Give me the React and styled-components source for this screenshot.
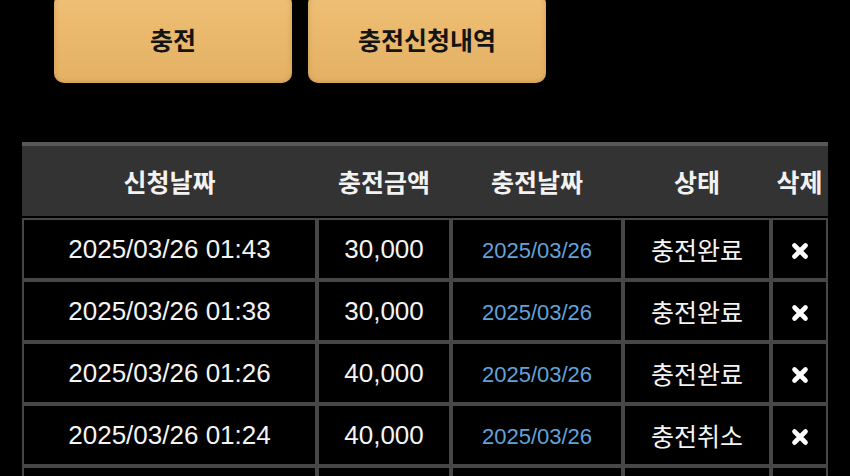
import React from 'react';
import styled, { createGlobalStyle } from 'styled-components';

const GlobalStyle = createGlobalStyle`
    html, body {
        margin: 0;
        padding: 0;
        background: #000;
        overflow: hidden;
    }
    body {
        font-family: "Noto Sans CJK KR", "Liberation Sans", sans-serif;
        color: #fff;
    }
`;

const Page = styled.div`
    padding: 0 22px;
`;

const ButtonRow = styled.div`
    display: flex;
    gap: 16px;
    padding-left: 32px;
    margin-top: -6px;
`;

const TabButton = styled.button`
    width: 238px;
    height: 89px;
    padding: 0;
    border: none;
    border-radius: 10px;
    background: linear-gradient(180deg, #eebf75 0%, #e9b86c 50%, #e4b164 100%);
    box-shadow: inset 0 0 5px rgba(150, 90, 20, 0.35), inset 0 2px 2px rgba(255, 235, 190, 0.3), 0 2px 3px rgba(0, 0, 0, 0.6);
    font-family: "Noto Sans CJK KR", sans-serif;
    font-size: 25px;
    font-weight: 700;
    color: #141414;
    cursor: pointer;
`;

const Table = styled.table`
    margin-top: 59px;
    width: 806px;
    table-layout: fixed;
    border-collapse: separate;
    border-spacing: 0;
`;

const HeadCell = styled.th`
    height: 70px;
    padding: 0;
    background: #333;
    border-top: 4px solid #585858;
    border-bottom: 2px solid #000;
    font-family: "Noto Sans CJK KR", sans-serif;
    font-size: 25px;
    font-weight: 700;
    color: #f2f2f2;
    text-align: center;
    vertical-align: middle;
`;

const Cell = styled.td`
    height: 58px;
    padding: 0;
    border: 2px solid #474747;
    background: #000;
    text-align: center;
    vertical-align: middle;
    color: #f4f4f4;
    font-family: ${({ $kr }) => ($kr ? '"Noto Sans CJK KR", sans-serif' : '"Liberation Sans", Arial, sans-serif')};
    font-size: ${({ $kr }) => ($kr ? 25 : 26)}px;
`;

const DateLink = styled.span`
    font-family: "Liberation Sans", Arial, sans-serif;
    font-size: 22px;
    color: #63a2d8;
`;

const DeleteIcon = () => (
    <svg width="18" height="18" viewBox="0 0 18 18" style={{ display: 'block', margin: '3px auto 0' }}>
        <path d="M3.5 3.5 L14.5 14.5 M14.5 3.5 L3.5 14.5" stroke="#fff" strokeWidth="4.6" strokeLinecap="round" />
    </svg>
);

const rows = [
    { requested: '2025/03/26 01:43', amount: '30,000', charged: '2025/03/26', status: '충전완료' },
    { requested: '2025/03/26 01:38', amount: '30,000', charged: '2025/03/26', status: '충전완료' },
    { requested: '2025/03/26 01:26', amount: '40,000', charged: '2025/03/26', status: '충전완료' },
    { requested: '2025/03/26 01:24', amount: '40,000', charged: '2025/03/26', status: '충전취소' },
    { requested: '2025/03/25 23:10', amount: '50,000', charged: '2025/03/25', status: '충전완료' },
];

export default function App() {
    return (
        <Page>
            <GlobalStyle />
            <ButtonRow>
                <TabButton>충전</TabButton>
                <TabButton>충전신청내역</TabButton>
            </ButtonRow>
            <Table>
                <colgroup>
                    <col style={{ width: 295 }} />
                    <col style={{ width: 134 }} />
                    <col style={{ width: 172 }} />
                    <col style={{ width: 148 }} />
                    <col style={{ width: 57 }} />
                </colgroup>
                <thead>
                    <tr>
                        <HeadCell>신청날짜</HeadCell>
                        <HeadCell>충전금액</HeadCell>
                        <HeadCell>충전날짜</HeadCell>
                        <HeadCell>상태</HeadCell>
                        <HeadCell>삭제</HeadCell>
                    </tr>
                </thead>
                <tbody>
                    {rows.map((row, i) => (
                        <tr key={i}>
                            <Cell>{row.requested}</Cell>
                            <Cell>{row.amount}</Cell>
                            <Cell><DateLink>{row.charged}</DateLink></Cell>
                            <Cell $kr>{row.status}</Cell>
                            <Cell><DeleteIcon /></Cell>
                        </tr>
                    ))}
                </tbody>
            </Table>
        </Page>
    );
}
